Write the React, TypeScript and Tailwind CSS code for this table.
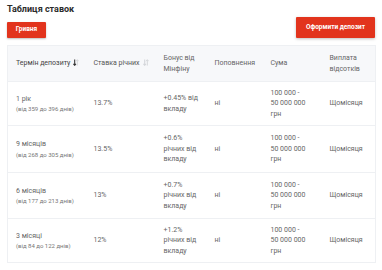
import React from 'react';

const ROWS = [
  { term: '1 рік', days: '(від 359 до 396 днів)', rate: '13.7%', bonus: ['+0.45% від', 'вкладу'] },
  { term: '9 місяців', days: '(від 268 до 305 днів)', rate: '13.5%', bonus: ['+0.6%', 'річних від', 'вкладу'] },
  { term: '6 місяців', days: '(від 177 до 213 днів)', rate: '13%', bonus: ['+0.7%', 'річних від', 'вкладу'] },
  { term: '3 місяці', days: '(від 84 до 122 днів)', rate: '12%', bonus: ['+1.2%', 'річних від', 'вкладу'] },
];

function SortIcon({ active }: { active?: boolean }) {
  return (
    <svg width="6" height="7" viewBox="0 0 6 8" className="inline-block ml-[3px] -mt-[1px] align-middle">
      <path d="M1.5 0.5 V7 M0 5.5 L1.5 7.2 L3 5.5" stroke={active ? '#333' : '#d4d6da'} strokeWidth="1.2" fill="none" />
      <path d="M4.5 7.5 V1 M3 2.5 L4.5 0.8 L6 2.5" stroke="#d4d6da" strokeWidth="1.1" fill="none" />
    </svg>
  );
}

export default function App() {
  return (
    <div className="w-[382px] h-[270px] bg-white overflow-hidden px-[7px] pt-[3px] text-[#666]" style={{ fontFamily: 'Roboto, "Noto Sans", sans-serif' }}>
      <h2 className="text-[9px] font-bold text-[#2b2b2b] leading-[12px]">Таблиця ставок</h2>
      <div className="flex items-end justify-between mt-[2px]">
        <button className="h-[16px] w-[39px] bg-[#e2341d] text-white text-[6.5px] font-bold rounded-[1px] shadow-[0_1px_2px_rgba(0,0,0,0.25)]">
          Гривня
        </button>
        <button className="h-[21px] w-[79px] bg-[#e2341d] text-white text-[6.5px] font-bold rounded-[1px] shadow-[0_1px_3px_rgba(0,0,0,0.25)]">
          Оформити депозит
        </button>
      </div>
      <table className="mt-[7px] w-[368px] table-fixed border-collapse border border-[#eef0f3] text-[7px] leading-[10.5px]">
        <colgroup>
          <col className="w-[78px]" />
          <col className="w-[70px]" />
          <col className="w-[51px]" />
          <col className="w-[56px]" />
          <col className="w-[59px]" />
          <col className="w-[54px]" />
        </colgroup>
        <thead>
          <tr className="h-[36px] bg-[#f7f8fa] text-left align-middle">
            <th className="pl-[8px] font-normal text-[#444] whitespace-nowrap">Термін депозиту<SortIcon active /></th>
            <th className="pl-[8px] font-normal text-[#555] whitespace-nowrap">Ставка річних<SortIcon /></th>
            <th className="pl-[8px] font-normal text-[#666]">Бонус від Мінфіну</th>
            <th className="pl-[8px] font-normal text-[#666]">Поповнення</th>
            <th className="pl-[8px] font-normal text-[#666]">Сума</th>
            <th className="pl-[8px] font-normal text-[#666]">Виплата відсотків</th>
          </tr>
        </thead>
        <tbody>
          {ROWS.map((r, i) => (
            <tr key={i} className={`align-middle ${i === 0 || i === 3 ? 'h-[44px]' : 'h-[46.5px]'} border-t border-[#eef0f3]`}>
              <td className="pl-[8px]">
                <div>{r.term}</div>
                <div className="text-[6px] leading-[9px] text-[#777] whitespace-nowrap">{r.days}</div>
              </td>
              <td className="pl-[8px]">{r.rate}</td>
              <td className="pl-[8px]">
                {r.bonus.map((b, j) => (
                  <div key={j} className="whitespace-nowrap">{b}</div>
                ))}
              </td>
              <td className="pl-[8px]">ні</td>
              <td className="pl-[8px]">
                <div>100 000 -</div>
                <div>50 000 000</div>
                <div>грн</div>
              </td>
              <td className="pl-[8px]">Щомісяця</td>
            </tr>
          ))}
        </tbody>
      </table>
    </div>
  );
}
